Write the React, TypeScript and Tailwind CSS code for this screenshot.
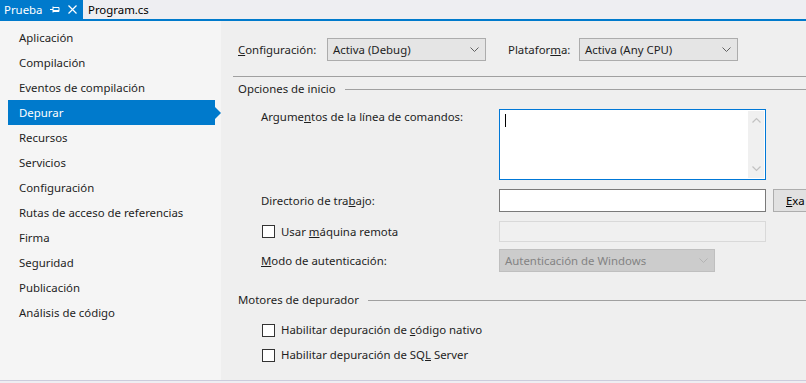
import { FC, ReactNode } from "react";

const navItems = [
  "Aplicación",
  "Compilación",
  "Eventos de compilación",
  "Depurar",
  "Recursos",
  "Servicios",
  "Configuración",
  "Rutas de acceso de referencias",
  "Firma",
  "Seguridad",
  "Publicación",
  "Análisis de código",
];

const Chevron: FC<{ color?: string }> = ({ color = "#606060" }) => (
  <svg width="9" height="6" viewBox="0 0 9 6" className="shrink-0">
    <polyline points="0.5,0.5 4.5,4.5 8.5,0.5" fill="none" stroke={color} strokeWidth="1" />
  </svg>
);

const Select: FC<{ value: string; width: string }> = ({ value, width }) => (
  <div className={`${width} h-[23px] flex items-center justify-between pl-[5px] pr-[6px] bg-[#e5e5e5] border border-[#acacac]`}>
    <span>{value}</span>
    <Chevron />
  </div>
);

const Checkbox: FC<{ children: ReactNode }> = ({ children }) => (
  <div className="flex items-center gap-[6px] h-[16px]">
    <div className="w-[13px] h-[13px] border border-[#333333] bg-white shrink-0" />
    <span>{children}</span>
  </div>
);

const GroupHeader: FC<{ title: string }> = ({ title }) => (
  <div className="flex items-center h-[16px]">
    <span>{title}</span>
    <div className="flex-1 h-px bg-[#a0a0a0] ml-[9px]" />
  </div>
);

export default function App() {
  return (
    <div
      className="w-[806px] h-[383px] overflow-hidden bg-[#eeeef2] text-[11.4px] text-[#1e1e1e] leading-[16px]"
      style={{ fontFamily: '"Segoe UI", "Noto Sans", sans-serif' }}
    >
      {/* document tabs */}
      <div className="h-[19px] flex">
        <div className="w-[83px] bg-[#007acc] text-white flex items-center pl-[4px]">
          <span className="w-[46px]">Prueba</span>
          <svg width="11" height="9" viewBox="0 0 11 9">
            <path d="M0 4.5h3M3 1.5v6M3 2.5h6v4h-6M3 5.5h6" fill="none" stroke="#ffffff" strokeWidth="1" />
          </svg>
          <svg width="9" height="9" viewBox="0 0 9 9" className="ml-[7px]">
            <path d="M0.5 0.5L8.5 8.5M8.5 0.5L0.5 8.5" stroke="#ffffff" strokeWidth="1.2" />
          </svg>
        </div>
        <div className="flex items-center pl-[5px] text-black">Program.cs</div>
      </div>
      <div className="h-[2px] bg-[#007acc]" />

      <div className="flex h-[359px]">
        {/* sidebar */}
        <div className="w-[221px] bg-[#f5f5f5] pt-[4px]">
          {navItems.map((item) =>
            item === "Depurar" ? (
              <div key={item} className="flex items-center h-[25px]">
                <div className="ml-[8px] w-[207px] h-full bg-[#007acc] text-white flex items-center pl-[11px] pt-[1px]">{item}</div>
                <div className="w-0 h-0 border-y-[6px] border-y-transparent border-l-[6px] border-l-[#007acc]" />
              </div>
            ) : (
              <div key={item} className="h-[25px] flex items-center pl-[19px] pt-[1px]">{item}</div>
            )
          )}
        </div>

        {/* main panel */}
        <div className="flex-1 bg-[#efefef] pl-[17px] pt-[17px]">
          <div className="flex items-center h-[23px]">
            <span className="w-[89px]"><u>C</u>onfiguración:</span>
            <Select value="Activa (Debug)" width="w-[159px]" />
            <span className="ml-[22px] w-[71px]">Platafor<u>m</u>a:</span>
            <Select value="Activa (Any CPU)" width="w-[159px]" />
          </div>
          <div className="h-px bg-[#a0a0a0] mt-[15px] -ml-[5px]" />

          <div className="mt-[4px]">
            <GroupHeader title="Opciones de inicio" />
          </div>

          <div className="pl-[23px]">
            <div className="flex mt-[12px]">
              <span className="w-[238px]">Argume<u>n</u>tos de la línea de comandos:</span>
              <div className="w-[267px] h-[71px] bg-white border border-[#0078d7] flex justify-between">
                <div className="w-px h-[13px] bg-black mt-[4px] ml-[5px]" />
                <div className="w-[16px] my-[1px] mr-[1px] bg-[#f0f0f0] flex flex-col items-center justify-between py-[6px]">
                  <svg width="9" height="6" viewBox="0 0 9 6">
                    <polyline points="0.5,5.5 4.5,1.5 8.5,5.5" fill="none" stroke="#c2c2c2" strokeWidth="1.2" />
                  </svg>
                  <svg width="9" height="6" viewBox="0 0 9 6">
                    <polyline points="0.5,0.5 4.5,4.5 8.5,0.5" fill="none" stroke="#c2c2c2" strokeWidth="1.2" />
                  </svg>
                </div>
              </div>
            </div>

            <div className="flex items-center mt-[9px] h-[23px]">
              <span className="w-[238px]">Directorio de tra<u>b</u>ajo:</span>
              <div className="w-[267px] h-[23px] bg-white border border-[#7a7a7a]" />
              <div className="ml-[7px] w-[60px] h-[23px] bg-[#e1e1e1] border border-[#adadad] flex items-center pl-[12px] text-black whitespace-nowrap overflow-hidden">
                <u>E</u>xa
              </div>
            </div>

            <div className="flex items-center mt-[9px] h-[21px]">
              <div className="w-[238px] pl-[1px]">
                <Checkbox>Usar <u>m</u>áquina remota</Checkbox>
              </div>
              <div className="w-[267px] h-[21px] bg-[#f0f0f0] border border-[#d9d9d9]" />
            </div>

            <div className="flex items-center mt-[7px] h-[23px]">
              <span className="w-[238px]"><u>M</u>odo de autenticación:</span>
              <div className="w-[216px] h-[23px] flex items-center justify-between pl-[5px] pr-[6px] bg-[#cccccc] border border-[#bfbfbf] text-[#838383]">
                <span>Autenticación de Windows</span>
                <Chevron color="#b3b3b3" />
              </div>
            </div>
          </div>

          <div className="mt-[20px]">
            <GroupHeader title="Motores de depurador" />
          </div>

          <div className="pl-[24px]">
            <div className="mt-[14px]">
              <Checkbox>Habilitar depuración de <u>c</u>ódigo nativo</Checkbox>
            </div>
            <div className="mt-[9px]">
              <Checkbox>Habilitar depuración de SQ<u>L</u> Server</Checkbox>
            </div>
          </div>
        </div>
      </div>
      <div className="h-px bg-[#ccccdc]" />
    </div>
  );
}
